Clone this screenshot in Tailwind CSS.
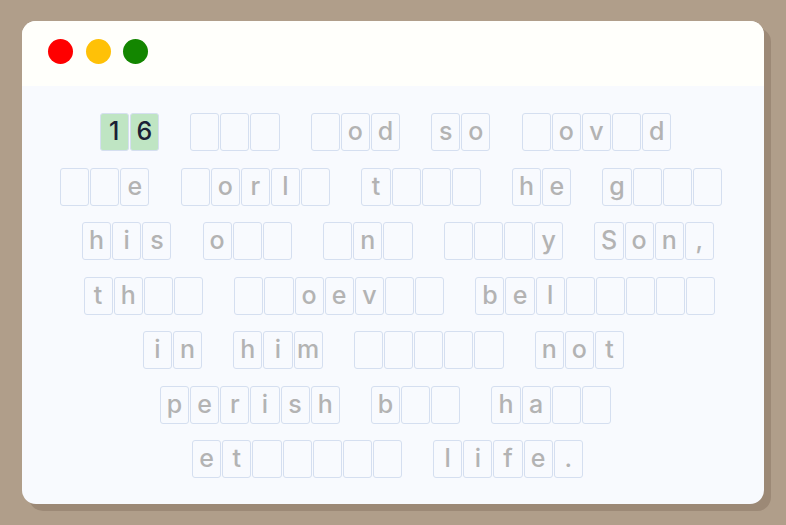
<!DOCTYPE html>
<html lang="en">
<head>
    <meta charset="UTF-8">
    <title>Verse</title>
    <script src="https://cdn.jsdelivr.net/npm/@tailwindcss/browser@4"></script>
</head>
<body class="bg-[#b09e8a] h-[525px] overflow-hidden font-['Inter',sans-serif]">
    <div class="pt-[21px] pl-[22px]">
        <div class="w-[742px] h-[483px] rounded-[14px] overflow-hidden bg-[#f8fafe] shadow-[7px_7px_0_0_#9c8976]">
            <div class="h-[65px] bg-[#fffffb] flex items-center gap-[12.5px] pl-[26px] pb-[5px]">
                <span class="w-[25px] h-[25px] rounded-full bg-[#ff0000]"></span>
                <span class="w-[25px] h-[25px] rounded-full bg-[#ffc107]"></span>
                <span class="w-[25px] h-[25px] rounded-full bg-[#138600]"></span>
            </div>
            <div id="verse" class="flex flex-col gap-[16.5px] pt-[27px]"></div>
        </div>
    </div>

    <script>
        // _ is a hidden letter
        const rows = [
            ['16 ___ _od so _ov_d', 'pr-[14px]'],
            ['__e _orl_ t___ he g___', 'pr-[3px]'],
            ['his o__ _n_ ___y Son,', 'pl-[11px]'],
            ['th__ __oev__ bel_____', 'pl-[14px]'],
            ['in him _____ not', 'pr-[18px]'],
            ['perish b__ ha__', 'pr-[14px]'],
            ['et_____ life.', 'pr-[10px]'],
        ];

        const cellClass = 'w-[29.15px] h-[38px] mr-[1px] shrink-0 flex items-center justify-center rounded-[3px] border-[1.5px] border-[#d5dff0] text-[25px] font-medium text-[#b3b3b3]';
        const doneClass = 'w-[29.15px] h-[38px] mr-[1px] shrink-0 flex items-center justify-center rounded-[3px] border-[1.5px] border-[#d5dff0] text-[25px] font-medium text-[#1a2035] bg-[#bfe5c3]';

        document.getElementById('verse').innerHTML = rows.map(([text, shift]) => `
            <div class="flex justify-center ${shift}">
                ${text.split('').map(ch => {
                    if (ch === ' ') return '<span class="w-[30.15px] shrink-0"></span>';
                    const cls = /[0-9]/.test(ch) ? doneClass : cellClass;
                    return `<span class="${cls}">${ch === '_' ? '' : ch}</span>`;
                }).join('')}
            </div>
        `).join('');
    </script>
</body>
</html>
